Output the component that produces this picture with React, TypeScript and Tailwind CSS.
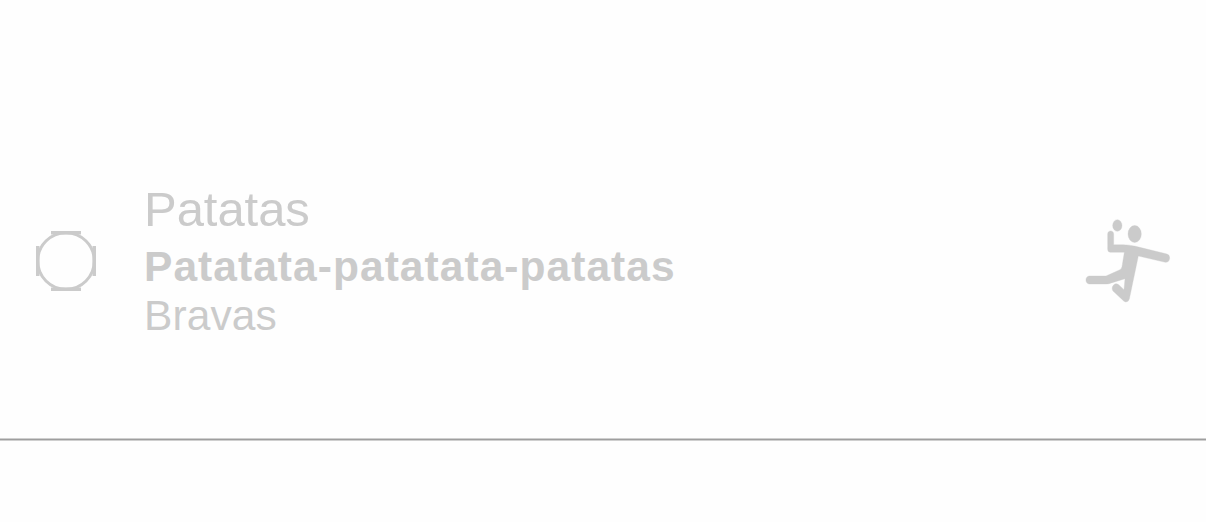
function RingIcon() {
  return (
    <svg className="size-[60px] shrink-0" viewBox="0 0 60 60" fill="none" aria-hidden="true">
      <circle cx="30" cy="30" r="28.3" stroke="#cbcbcb" strokeWidth="3" />
      <path d="M15 0H45V3.500H15ZM15 56.500H45V60H15ZM0 15H3.500V45H0ZM56.500 15H60V45H56.500Z" fill="#cbcbcb" />
    </svg>
  );
}

function HandballIcon() {
  return (
    <svg className="mb-0.5 size-[100px] shrink-0" viewBox="0 0 300 300" fill="#cbcbcb" stroke="#cbcbcb" strokeWidth="1" aria-hidden="true">
      <ellipse cx="118" cy="46.500" rx="14" ry="17.500" />
      <ellipse cx="170" cy="72" rx="20" ry="25.500" />
      <path d="M89 72C89 60 107 60 107 72V104H135Q153 104 173 109L267 132Q276 135 275 145Q273 158 262 157L181 138L154 267Q151 277 143 276Q138 275 133 269L105 243C97 232 110 215 122 224L138 239L141 206L93 221Q90 222 85 222H35C20 222 20 198 35 198H84L124 180Q131 177 132 170L139 127H97Q89 127 89 117Z" />
    </svg>
  );
}

export default function App() {
  return (
    <main className="flex h-[522px] w-full flex-col bg-[#fefefe] text-[#cbcbcb] [font-family:'Liberation_Sans',Helvetica,Arial,sans-serif]">
      <section className="flex h-[438px] items-center pt-[84px] pr-7 pl-9">
        <RingIcon />
        <div className="ml-12 flex grow flex-col whitespace-nowrap">
          <p className="h-[60px] text-[49px] leading-[56px] tracking-[-0.05px]">Patatas</p>
          <p className="h-[49px] text-[42.5px] leading-[51px] font-bold tracking-[1.05px]">Patatata-patatata-patatas</p>
          <p className="h-[51px] text-[42.5px] leading-[51px] tracking-[0.1px]">Bravas</p>
        </div>
        <HandballIcon />
      </section>
      <div className="h-[3px] border-y border-[#cfcfcf] bg-[#9e9e9e]" />
    </main>
  );
}
